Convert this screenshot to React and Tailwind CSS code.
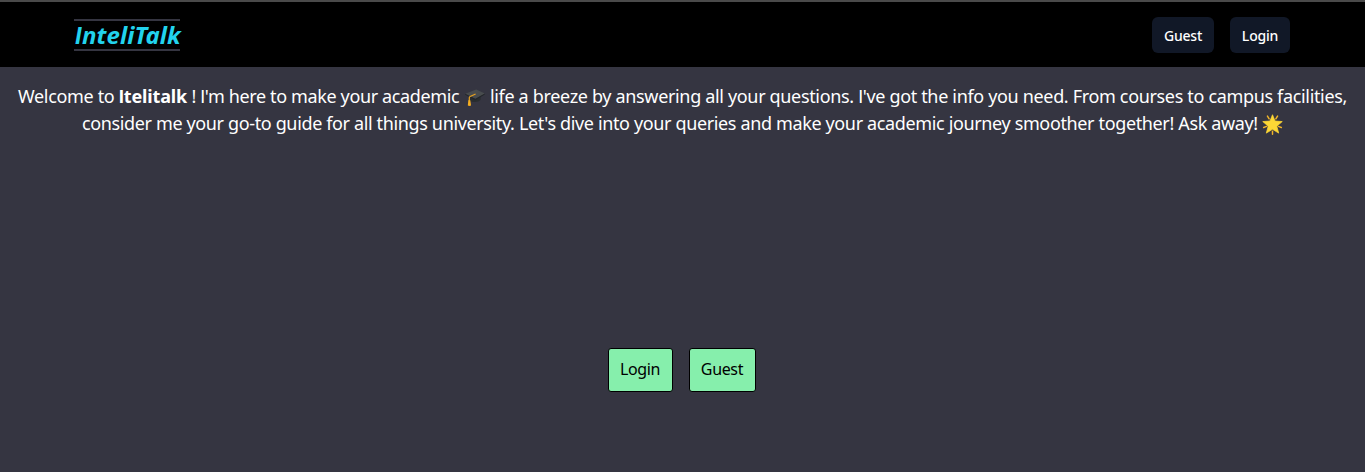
function GraduationCap() {
  return (
    <svg viewBox="0 0 20 20" className="mx-px inline-block h-5 w-5 align-[-4px]" aria-hidden="true">
      <path d="M4.6 8v5.4c2.4 2.4 9 2.2 11-.6V8z" fill="#292d2f" />
      <path d="M.2 6.8 11.2 2.6l8.6 4-9.5 5.6z" fill="#484c4e" />
      <path d="m.2 6.8 10.1 5 9.5-5.2v.9l-9.5 5.8L.2 7.7z" fill="#23272a" />
      <path d="M10.6 7 5.1 9.5c-.6.3-.8.7-.8 1.3v3.3" fill="none" stroke="#e9a31f" strokeWidth="1.2" />
      <path d="M3.3 13.2h2l.7 5.3c-.9.6-2.4.5-3.2-.1z" fill="#f6ae20" />
    </svg>
  );
}

function GlowingStar() {
  return (
    <svg viewBox="0 0 20 20" className="inline-block h-[21px] w-[21px] align-[-5px]" aria-hidden="true">
      <path
        d="m5.2 2 1.6 2.6M14.8 2l-1.6 2.6M1.6 12.8l2.8-1M18.4 12.8l-2.8-1M10 16.4v2.8"
        stroke="#f0b429"
        strokeWidth="1.4"
        strokeLinecap="round"
      />
      <path
        d="m10 .7 2.4 6 6.9.5-5.2 4.4 1.8 6.6L10 14.6l-5.9 3.6 1.8-6.6L.7 7.2l6.9-.5z"
        fill="#fdd835"
        stroke="#fdd835"
        strokeWidth=".7"
        strokeLinejoin="round"
      />
    </svg>
  );
}

function PlainI() {
  return <span className="font-['Roboto',sans-serif]">I</span>;
}

function NavButton({ children, width }) {
  return (
    <button className={`${width} h-9 rounded-md bg-[#111827] text-center text-[14px] font-medium tracking-[-0.2px] text-white`}>
      {children}
    </button>
  );
}

function ActionButton({ children, width }) {
  return (
    <button className={`${width} h-11 rounded-[3px] border border-black bg-[#86efac] pb-0.5 text-center text-[16px] tracking-[-0.35px] text-black`}>
      {children}
    </button>
  );
}

export default function App() {
  return (
    <div className="flex h-[472px] w-full flex-col overflow-hidden bg-[#353541] font-['Noto_Sans',sans-serif]">
      <header className="flex h-[67px] shrink-0 items-start justify-between border-t-2 border-[#4a4a4a] bg-black pr-[75px] pl-[74px]">
        <div className="mt-[17px] flex h-8 w-[106px] items-center border-y-2 border-[#353541] pl-px text-[24px] leading-7 font-bold whitespace-nowrap text-[#22d3ee] italic">
          <span className="tracking-[0.1px]"><PlainI />nteliTalk</span>
        </div>
        <nav className="mt-[15px] flex gap-4">
          <NavButton width="w-[62px]">Guest</NavButton>
          <NavButton width="w-[60px]">Login</NavButton>
        </nav>
      </header>
      <main className="flex flex-1 flex-col items-center">
        <p className="mt-4 w-full text-center text-[18px] leading-[27px] whitespace-nowrap text-white">
          <span className="block tracking-[-0.335px]">
            Welcome to <b className="tracking-[-0.15px]"><PlainI />telitalk</b> ! <PlainI />
            <span className="tracking-[-0.37px]">'m here to make your academic</span> <GraduationCap /> life a breeze by
            answering all your questions. <PlainI />'ve got the info you need. From courses to campus facilities,
          </span>
          <span className="block tracking-[-0.36px]">
            consider me your go-to guide for all things university. Let's dive into your queries and make your academic
            journey smoother together! Ask away! <GlowingStar />
          </span>
        </p>
        <div className="mt-[211px] flex gap-4 pr-0.5">
          <ActionButton width="w-[65px]">Login</ActionButton>
          <ActionButton width="w-[67px]">Guest</ActionButton>
        </div>
      </main>
    </div>
  );
}
